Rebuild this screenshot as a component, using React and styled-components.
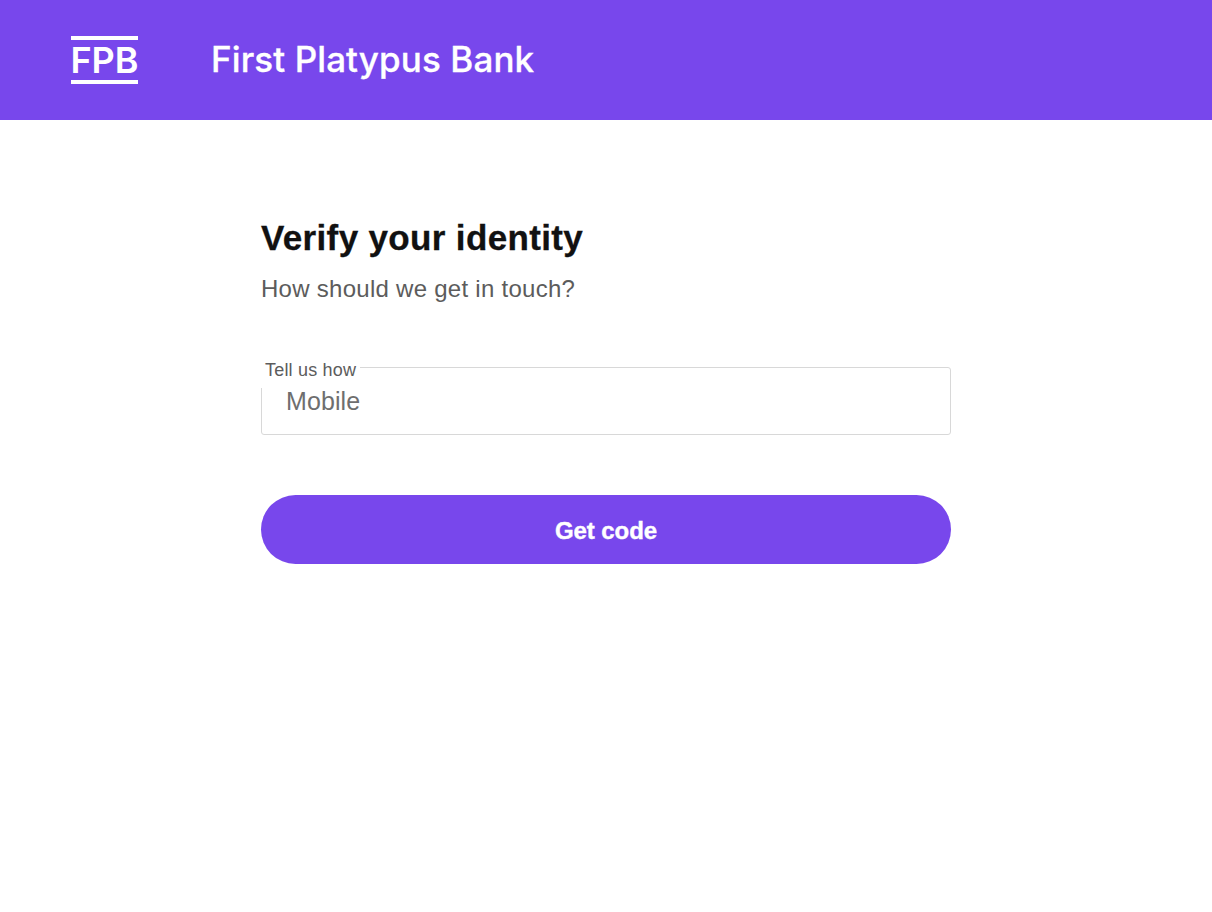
import React from "react";
import styled, { createGlobalStyle } from "styled-components";

const Global = createGlobalStyle`
  html, body { margin: 0; padding: 0; background: #fff; }
  body { font-family: "Liberation Sans", Arial, sans-serif; }
  * { box-sizing: border-box; }
`;
const Page = styled.div`min-height: 912px; background: #fff;`;
const Header = styled.header`
  height: 120px; background: #7847ec; display: flex; align-items: center; padding-left: 71px; color: #fff;
`;
const Logo = styled.div`
  width: 67px; height: 48px; padding-bottom: 1px; border-top: 4px solid #fff; border-bottom: 4px solid #fff;
  display: flex; align-items: center; justify-content: center;
  font-family: Inter, "Liberation Sans", sans-serif; font-weight: 600;
  font-size: 36px; line-height: 1; white-space: nowrap;
`;
const Title = styled.div`
  margin-left: 73px; padding-bottom: 2px; font-family: Inter, "Liberation Sans", sans-serif; font-weight: 500;
  font-size: 35px; line-height: 40px; letter-spacing: 0.1px; -webkit-text-stroke: 0.3px #fff;
`;
const Main = styled.main`width: 690px; margin: 0 auto; padding-top: 97px;`;
const H1 = styled.h1`margin: 0; font-size: 35px; line-height: 42px; font-weight: 700; color: #111; letter-spacing: 0.35px; -webkit-text-stroke: 0.3px #111;`;
const Sub = styled.p`margin: 16px 0 0; font-size: 24px; line-height: 28px; color: #5c5c5c; font-weight: 400; letter-spacing: 0.27px;`;
const Field = styled.div`
  position: relative; margin-top: 64px; height: 68px; padding-left: 24px; border: 1px solid #d8d8d8; border-radius: 3px;
  display: flex; align-items: center;
`;
const Label = styled.label`
  position: absolute; left: -1px; top: -9px; height: 29px; padding: 0 4px; background: #fff;
  font-size: 18px; line-height: 22px; color: #5c5c5c; letter-spacing: 0.2px;
`;
const Value = styled.div`font-size: 25px; line-height: 28px; color: #6e6e6e; letter-spacing: 0.1px;`;
const Button = styled.button`
  display: block; width: 100%; height: 69px; margin-top: 60px; padding: 2px 0 0; border: 0; border-radius: 35px;
  background: #7847ec; color: #fff; font: 700 24px "Liberation Sans", Arial, sans-serif;
  letter-spacing: -0.1px; -webkit-text-stroke: 0.4px #fff;
`;
export default function App() {
  return (
    <Page>
      <Global />
      <Header>
        <Logo>FPB</Logo>
        <Title>First Platypus Bank</Title>
      </Header>
      <Main>
        <H1>Verify your identity</H1>
        <Sub>How should we get in touch?</Sub>
        <Field>
          <Label>Tell us how</Label>
          <Value>Mobile</Value>
        </Field>
        <Button>Get code</Button>
      </Main>
    </Page>
  );
}
